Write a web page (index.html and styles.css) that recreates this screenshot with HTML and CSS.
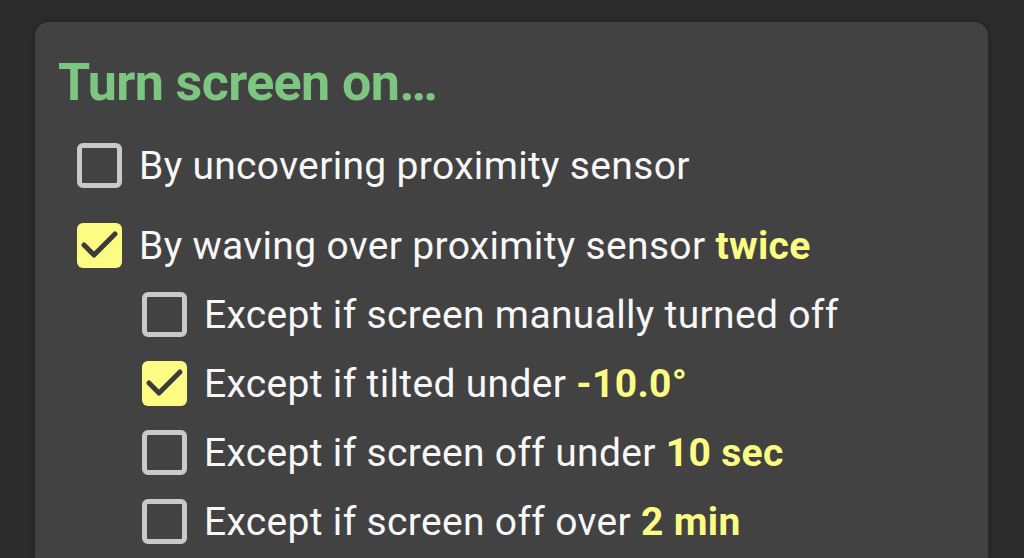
FILE: index.html
```html
<!DOCTYPE html>
<html lang="en">
<head>
    <meta charset="UTF-8">
    <meta name="viewport" content="width=device-width, initial-scale=1.0">
    <title>Turn screen on</title>
    <link rel="stylesheet" href="styles.css">
</head>
<body>
    <div class="card">
        <h2 class="card-title">Turn screen on…</h2>

        <div class="option">
            <span class="box"></span>
            <span class="label">By uncovering proximity sensor</span>
        </div>

        <div class="option gap-top">
            <span class="box checked">
                <svg viewBox="0 0 45 45"><polyline points="7,22 17,32 38,11"/></svg>
            </span>
            <span class="label">By waving over proximity sensor <b class="value">twice</b></span>
        </div>

        <div class="sub-options">
            <div class="option">
                <span class="box"></span>
                <span class="label">Except if screen manually turned off</span>
            </div>
            <div class="option">
                <span class="box checked">
                    <svg viewBox="0 0 45 45"><polyline points="7,22 17,32 38,11"/></svg>
                </span>
                <span class="label">Except if tilted under <b class="value">-10.0°</b></span>
            </div>
            <div class="option">
                <span class="box"></span>
                <span class="label">Except if screen off under <b class="value">10 sec</b></span>
            </div>
            <div class="option">
                <span class="box"></span>
                <span class="label">Except if screen off over <b class="value">2 min</b></span>
            </div>
        </div>
    </div>
</body>
</html>
```

FILE: styles.css
```css
:root {
    --page-bg: #2c2c2c;
    --card-bg: #424242;
    --title-color: #7dc681;
    --text-color: #f7f7f7;
    --value-color: #fcfc84;
    --box-border: #c9c9c9;
}

* {
    box-sizing: border-box;
}

html, body {
    height: 100%;
}

body {
    margin: 0;
    background: var(--page-bg);
    font-family: Roboto, "Noto Sans", sans-serif;
    overflow: hidden;
}

/* the card continues below the fold, so only the top corners are rounded */
.card {
    margin: 22px 36px 0 35px;
    height: 536px;
    padding: 31px 26px 0 42px;
    background: var(--card-bg);
    border-radius: 14px 14px 0 0;
    box-shadow: 0 0 6px rgba(0, 0, 0, 0.35);
}

.card-title {
    margin: 0 0 18px -19px;
    font-size: 52px;
    line-height: 60px;
    font-weight: 700;
    letter-spacing: -0.6px;
    color: var(--title-color);
}

.option {
    display: flex;
    align-items: center;
    gap: 17px;
    height: 69px;
}

.gap-top {
    margin-top: 11px;
}

.sub-options {
    padding-left: 65px;
}

.label {
    font-size: 39px;
    letter-spacing: 0.33px;
    color: var(--text-color);
    white-space: nowrap;
}

.value {
    font-weight: 700;
    color: var(--value-color);
}

/* square checkbox, outlined when off, filled yellow when on */
.box {
    flex: none;
    width: 45px;
    height: 45px;
    border: 5px solid var(--box-border);
    border-radius: 6px;
}

.box.checked {
    border: none;
    background: var(--value-color);
}

.box svg {
    display: block;
    width: 45px;
    height: 45px;
}

.box polyline {
    fill: none;
    stroke: #3b3b3b;
    stroke-width: 5;
    stroke-linecap: round;
    stroke-linejoin: round;
}
```
